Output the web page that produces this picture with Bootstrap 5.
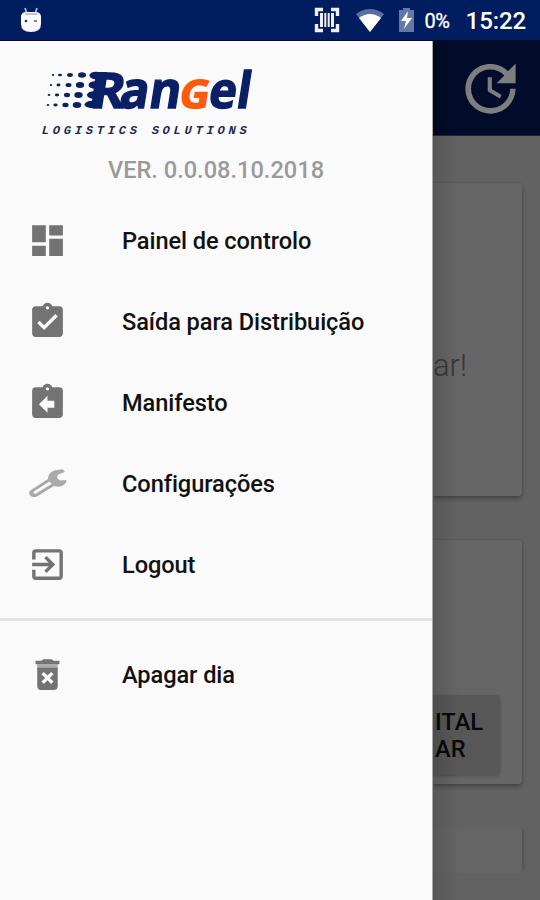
<!DOCTYPE html>
<html lang="pt">
<head>
<meta charset="utf-8">
<meta name="viewport" content="width=device-width, initial-scale=1">
<title>Rangel Logistics Solutions</title>
<link href="https://cdn.jsdelivr.net/npm/bootstrap@5.3.0/dist/css/bootstrap.min.css" rel="stylesheet">
<style>
body{font-family:Roboto,"Liberation Sans",sans-serif;background:#626262}
.screen{width:540px;height:900px}
.statusbar{height:41px;background:#001d5f;border-bottom:1px solid #000b26;padding-left:19px;padding-right:14px}
.battery-text{font-size:20px;font-weight:400;line-height:42px;padding-top:1px;margin-left:10px;width:26px;white-space:nowrap;letter-spacing:-.6px;-webkit-text-stroke:.3px #fff}
.charge{margin-left:14px}
.clock{font-size:24px;font-weight:500;line-height:42px;padding-top:2px;letter-spacing:-.1px;margin-left:15px;white-space:nowrap}
.drawer{width:433px;background:#fafafa;border-right:1px solid #a8a8a8}
.brand{height:159px}
.version{font-size:23.6px;font-weight:500;line-height:28px;color:#9a9a9a;margin-top:16px;white-space:nowrap}
.entry{height:81px;padding-left:27px;color:#111;font-size:23.6px;font-weight:500;white-space:nowrap;line-height:28px;letter-spacing:-.08px}
.entry svg{width:41px;height:41px;fill:#737373;margin-right:54px;flex:none}
.rule{height:3px;background:#e2e2e2;margin:13px 0}
.content-pane{background:linear-gradient(90deg,#575757,#626262 26px);min-width:0}
.appbar{height:95px;background:linear-gradient(90deg,#00081f,#000c29 20px);border-bottom:1px solid #20242f;padding-right:16px}
.panel{margin-right:18px;background:linear-gradient(90deg,#585858,#666 26px);border-radius:0 4px 4px 0;box-shadow:0 3px 4px rgba(0,0,0,.25),0 0 2px rgba(0,0,0,.18)}
.panel-a{height:313px;margin-top:47px;padding-top:164px}
.panel-b{height:244px;margin-top:44px;padding-top:155px}
.panel-c{height:46px;margin-top:43px;background:linear-gradient(90deg,#585858,#656565 26px);box-shadow:4px 0 3px -2px rgba(0,0,0,.16)}
.hint{font-size:31px;font-weight:300;line-height:38px;color:#353535}
.action{width:67px;height:80px;background:linear-gradient(90deg,#4c4c4c,#575757 22px);border-radius:0 4px 4px 0;box-shadow:0 1px 3px rgba(0,0,0,.25);font-size:23.6px;font-weight:500;line-height:27px;color:#080808;padding:14px 0 0 2px;white-space:nowrap}
</style>
<script src="https://cdn.jsdelivr.net/npm/bootstrap@5.3.0/dist/js/bootstrap.bundle.min.js"></script>
</head>
<body>
<div class="screen d-flex flex-column overflow-hidden">
  <header class="statusbar d-flex align-items-center text-white flex-shrink-0">
    <svg width="24" height="28" viewBox="0 0 24 28"><path d="M6 2l2 6M18 2l-2 6" stroke="#a9b5d4" stroke-width="1.8"/><path d="M2 10Q3 6 7 6H17Q21 6 22 10V18Q22 26 12 26T2 18Z" fill="#f7f9fc"/><path d="M6 8H18" stroke="#bcc5dc" stroke-width="2"/><circle cx="7" cy="15" r="1.3" fill="#333"/><ellipse cx="16.5" cy="15" rx="1.8" ry="1.1" fill="#777"/></svg>
    <svg class="ms-auto" width="26" height="26" viewBox="0 0 26 26" fill="none" stroke="#eef0f6"><path d="M2.500 9V2.500H9M17 2.500H23.500V9M23.500 17V23.500H17M9 23.500H2.500V17" stroke-width="3.400"/><path d="M7.500 6V20M18.500 6V20" stroke-width="3"/><path d="M11.300 6V20M14.700 6V20" stroke-width="2"/></svg>
    <svg class="ms-3" width="28" height="26" viewBox="0 0 28 26"><path d="M0 7Q14-3 28 7L14 25Z" fill="#5870a4"/><path d="M3 11Q14 3 25 11L14 25Z" fill="#fff"/></svg>
    <svg class="charge" width="17" height="26" viewBox="0 0 17 26"><path d="M1 3H5V1H12V3H16V25H1Z" fill="#6278a6"/><path d="M10 4L3 14H8L6 22L14 11H9Z" fill="#fff"/></svg>
    <span class="battery-text">0%</span>
    <span class="clock">15:22</span>
  </header>
  <div class="d-flex flex-grow-1">
    <nav class="drawer flex-shrink-0">
      <div class="brand d-flex flex-column align-items-center">
        <svg class="align-self-start" width="270" height="99" viewBox="0 41 270 99" font-family="'Open Sans','Noto Sans',sans-serif">
          <g fill="#0a1f66">
            <ellipse cx="53" cy="75" rx="1.200" ry=".9"/><ellipse cx="60" cy="75" rx="2" ry="1.300"/><ellipse cx="70" cy="75" rx="2.900" ry="1.900"/><ellipse cx="82" cy="75" rx="4" ry="2.800"/>
            <ellipse cx="51" cy="85" rx="1.200" ry=".9"/><ellipse cx="58.500" cy="85" rx="2" ry="1.400"/><ellipse cx="68.500" cy="85" rx="3" ry="2.100"/><ellipse cx="80" cy="85" rx="4.200" ry="3"/>
            <ellipse cx="49" cy="95" rx="1.300" ry=".9"/><ellipse cx="57" cy="95" rx="2.200" ry="1.400"/><ellipse cx="67" cy="95" rx="3" ry="2.200"/><ellipse cx="78.500" cy="95" rx="4.200" ry="3"/>
            <ellipse cx="48" cy="105" rx="1.300" ry=".9"/><ellipse cx="55.500" cy="105" rx="2.200" ry="1.400"/><ellipse cx="65.500" cy="105" rx="3.100" ry="2.200"/><ellipse cx="77" cy="105" rx="4.300" ry="3"/>
            <ellipse cx="96" cy="75.500" rx="6.500" ry="3.800"/><ellipse cx="95" cy="85" rx="6.500" ry="3.800"/><ellipse cx="94" cy="95" rx="7" ry="3.800"/><ellipse cx="92" cy="104.500" rx="7.500" ry="3.700"/>
            <path d="M96 72H107L101 108H91Z"/>
          </g>
          <g fill="#0a1f66" stroke="#0a1f66" stroke-width="1.400" font-weight="700" font-size="49" transform="translate(0 107.500) skewX(-9)">
            <text x="89" y="0" textLength="34" lengthAdjust="spacingAndGlyphs">R</text>
            <text x="118" y="0" font-size="51" textLength="61" lengthAdjust="spacingAndGlyphs">an</text>
            <text x="178" y="0" font-size="39" fill="#ff5a0a" stroke="#ff5a0a" textLength="30" lengthAdjust="spacingAndGlyphs">G</text>
            <text x="207" y="0" font-size="50" textLength="42" lengthAdjust="spacingAndGlyphs">el</text>
          </g>
          <text transform="translate(41 134) skewX(-14)" font-family="'Liberation Mono',monospace" font-weight="700" font-size="12" fill="#1f2850" textLength="205" lengthAdjust="spacing">LOGISTICS SOLUTIONS</text>
        </svg>
        <div class="version">VER. 0.0.08.10.2018</div>
      </div>
      <div class="entry d-flex align-items-center"><svg viewBox="0 0 24 24"><path d="M3 13h8V3H3v10zm0 8h8v-6H3v6zm10 0h8V11h-8v10zm0-18v6h8V3h-8z"/></svg><span>Painel de controlo</span></div>
      <div class="entry d-flex align-items-center"><svg viewBox="0 0 24 24"><path d="M19 3h-4.180C14.400 1.840 13.300 1 12 1c-1.300 0-2.400.84-2.820 2H5c-1.100 0-2 .9-2 2v14c0 1.100.9 2 2 2h14c1.100 0 2-.9 2-2V5c0-1.100-.9-2-2-2zm-7 0c.55 0 1 .45 1 1s-.45 1-1 1-1-.45-1-1 .45-1 1-1zm-2 14l-4-4 1.410-1.410L10 14.170l6.590-6.590L18 9l-8 8z"/></svg><span>Saída para Distribuição</span></div>
      <div class="entry d-flex align-items-center"><svg viewBox="0 0 24 24"><path d="M19 3h-4.180C14.400 1.840 13.300 1 12 1c-1.300 0-2.400.84-2.820 2H5c-1.100 0-2 .9-2 2v14c0 1.100.9 2 2 2h14c1.100 0 2-.9 2-2V5c0-1.100-.9-2-2-2zm-7 0c.55 0 1 .45 1 1s-.45 1-1 1-1-.45-1-1 .45-1 1-1zm4 12h-4v3l-5-5 5-5v3h4v4z"/></svg><span>Manifesto</span></div>
      <div class="entry d-flex align-items-center"><svg viewBox="0 0 41 41"><path fill="#aaa" fill-rule="evenodd" d="M4 27L21 16C21 10 26 6 36 6.500L38 9L31 11.500L30 15L33 17.500L39 17L39.500 19C36 24 31 24.500 27 23L10 33.500C4 36-.5 30 4 27ZM9 30.500L24.500 21L22.500 18.500L7.500 28C5.500 29.500 7 31.500 9 30.500Z"/></svg><span>Configurações</span></div>
      <div class="entry d-flex align-items-center"><svg viewBox="0 0 24 24"><path d="M10.090 15.590L11.500 17l5-5-5-5-1.410 1.410L12.670 11H3v2h9.670l-2.580 2.590zM19 3H5c-1.110 0-2 .9-2 2v4h2V5h14v14H5v-4H3v4c0 1.100.89 2 2 2h14c1.100 0 2-.9 2-2V5c0-1.100-.9-2-2-2z"/></svg><span>Logout</span></div>
      <div class="rule"></div>
      <div class="entry d-flex align-items-center"><svg viewBox="0 0 24 24"><path fill="#aaa" d="M6 6h12v3H6z"/><path fill-rule="evenodd" d="M6 19c0 1.100.9 2 2 2h8c1.100 0 2-.9 2-2V8H6v11zm2.460-7.120l1.410-1.410L12 12.590l2.120-2.120 1.410 1.410L13.410 14l2.120 2.120-1.410 1.410L12 15.410l-2.120 2.120-1.410-1.410L10.590 14l-2.130-2.120zM15.500 4l-1-1h-5l-1 1H5v2h14V4z"/></svg><span>Apagar dia</span></div>
    </nav>
    <main class="content-pane flex-grow-1 overflow-hidden">
      <div class="appbar d-flex align-items-center justify-content-end">
        <svg width="67" height="67" viewBox="0 0 24 24" fill="#7e7e7e"><path d="M21 10.120h-6.780l2.740-2.820c-2.730-2.700-7.150-2.800-9.880-.1-2.730 2.710-2.730 7.080 0 9.790 2.730 2.710 7.150 2.710 9.880 0C18.320 15.650 19 14.080 19 12.100h2c0 1.980-.88 4.550-2.640 6.290-3.510 3.480-9.210 3.480-12.720 0-3.500-3.470-3.530-9.110-.02-12.580 3.510-3.470 9.140-3.470 12.650 0L21 3v7.120zM12.500 8v4.250l3.500 2.080-.72 1.210L11 13V8h1.500z"/></svg>
      </div>
      <section class="panel panel-a"><div class="hint">ar!</div></section>
      <section class="panel panel-b"><div class="action"><div>ITAL</div><div>AR</div></div></section>
      <section class="panel panel-c"></section>
    </main>
  </div>
</div>
</body>
</html>
